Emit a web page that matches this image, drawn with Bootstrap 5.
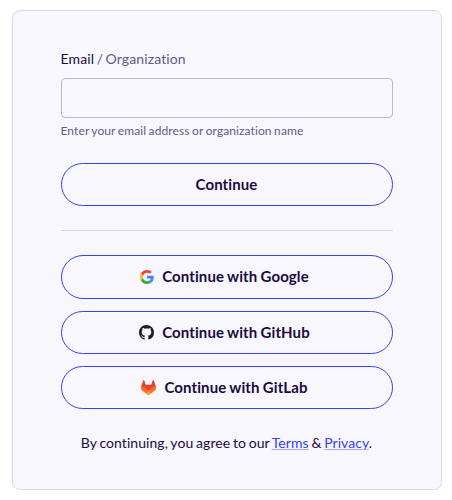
<!DOCTYPE html>
<html lang="en">
<head>
<meta charset="utf-8">
<meta name="viewport" content="width=device-width, initial-scale=1">
<title>Sign in</title>
<link href="https://cdn.jsdelivr.net/npm/bootstrap@5.3.0/dist/css/bootstrap.min.css" rel="stylesheet">
<style>
body{font-family:Lato,"Liberation Sans",sans-serif;font-variant-ligatures:none;color:#1b0b42;background:#fff;font-size:14px;line-height:20px}
.auth-card{width:430px;height:480px;margin:10px 0 0 12px;padding:38px 48px 0;background:#f8f7fd;border:1px solid #d9d7e3;border-radius:8px}
.auth-label{color:#655a87;line-height:20px;margin:0 0 9px -.5px;letter-spacing:.12px;word-spacing:-1.2px}
.auth-label span{color:#1b0b42}
.auth-input{height:40px;background:transparent;border:1px solid #bcb8d0;border-radius:4px}
.auth-help{font-size:12px;line-height:16px;margin:5px 0 0 -.5px;color:#655a87;letter-spacing:.1px;word-spacing:-.7px}
.btn-auth{height:43.2px;border:1px solid #3443f4;color:#1b0b42;font-size:15px;font-weight:700;line-height:20px;padding:0;font-variant-ligatures:none;letter-spacing:.1px;word-spacing:-.5px}
.btn-auth:hover{border-color:#3443f4;background:#eeedfc;color:#1b0b42}
.auth-submit{margin-top:23.6px;padding-right:1px}
.auth-rule{margin:24.2px 0 24.4px;border-top:1px solid #d9d7e3;opacity:1}
.auth-list{gap:12px}
.auth-list .btn-auth{padding-right:5px;padding-bottom:1px}
.auth-list svg{margin-top:1px}
.auth-legal{margin-top:24px;margin-left:-1px;letter-spacing:.06px;word-spacing:-.9px}
.auth-legal a{color:#3443f4;text-decoration-color:#a3a9fa;text-underline-offset:1px}
</style>
</head>
<body>
<main class="auth-card">
<form>
<label for="login" class="auth-label d-block"><span>Email</span> / Organization</label>
<input id="login" type="text" class="form-control auth-input">
<div class="auth-help">Enter your email address or organization name</div>
<button type="button" class="btn btn-auth auth-submit rounded-pill w-100">Continue</button>
<hr class="auth-rule">
<div class="auth-list d-flex flex-column">
<button type="button" class="btn btn-auth rounded-pill d-flex align-items-center justify-content-center gap-2">
<svg width="14" height="14" viewBox="0 0 48 48" aria-hidden="true"><path fill="#EA4335" d="M24 9.5c3.54 0 6.71 1.22 9.21 3.6l6.85-6.85C35.9 2.38 30.47 0 24 0 14.62 0 6.51 5.38 2.56 13.22l7.98 6.19C12.43 13.72 17.74 9.5 24 9.5z"/><path fill="#4285F4" d="M46.98 24.55c0-1.57-.15-3.09-.38-4.55H24v9.02h12.94c-.58 2.96-2.26 5.48-4.78 7.18l7.73 6c4.51-4.18 7.09-10.36 7.09-17.65z"/><path fill="#FBBC05" d="M10.53 28.59A14.5 14.5 0 0 1 9.77 24c0-1.6.27-3.14.76-4.59l-7.98-6.19A24 24 0 0 0 0 24c0 3.88.92 7.54 2.56 10.78l7.97-6.19z"/><path fill="#34A853" d="M24 48c6.48 0 11.93-2.13 15.89-5.81l-7.73-6c-2.15 1.45-4.92 2.3-8.16 2.3-6.26 0-11.57-4.22-13.47-9.91l-7.98 6.19C6.51 42.62 14.62 48 24 48z"/></svg>
<span>Continue with Google</span></button>
<button type="button" class="btn btn-auth rounded-pill d-flex align-items-center justify-content-center gap-2">
<svg width="15" height="15" viewBox="0 0 16 16" aria-hidden="true"><path fill="#1b1f23" d="M8 0C3.58 0 0 3.58 0 8c0 3.54 2.29 6.53 5.47 7.59.4.07.55-.17.55-.38 0-.19-.01-.82-.01-1.49-2.01.37-2.53-.49-2.69-.94-.09-.23-.48-.94-.82-1.13-.28-.15-.68-.52-.01-.53.63-.01 1.08.58 1.23.82.72 1.21 1.87.87 2.33.66.07-.52.28-.87.51-1.07-1.78-.2-3.64-.89-3.64-3.95 0-.87.31-1.59.82-2.15-.08-.2-.36-1.02.08-2.12 0 0 .67-.21 2.2.82.64-.18 1.32-.27 2-.27s1.36.09 2 .27c1.53-1.04 2.2-.82 2.2-.82.44 1.1.16 1.92.08 2.12.51.56.82 1.27.82 2.15 0 3.07-1.87 3.75-3.65 3.95.29.25.54.73.54 1.48 0 1.07-.01 1.93-.01 2.2 0 .21.15.46.55.38A8.01 8.01 0 0 0 16 8c0-4.42-3.58-8-8-8z"/></svg>
<span>Continue with GitHub</span></button>
<button type="button" class="btn btn-auth rounded-pill d-flex align-items-center justify-content-center gap-2">
<svg width="15" height="15" viewBox="0 0 25 24" preserveAspectRatio="none" aria-hidden="true"><path fill="#E24329" d="m24.507 9.5-.034-.09L21.082.562a.896.896 0 0 0-1.694.091l-2.29 7.01H7.825L5.535.653a.898.898 0 0 0-1.694-.09L.451 9.411.416 9.5a6.297 6.297 0 0 0 2.09 7.278l.012.01.03.022 5.16 3.867 2.56 1.935 1.554 1.176a1.051 1.051 0 0 0 1.268 0l1.555-1.176 2.56-1.935 5.197-3.89.014-.01A6.297 6.297 0 0 0 24.507 9.5Z"/><path fill="#FC6D26" d="m24.507 9.5-.034-.09a11.44 11.44 0 0 0-4.56 2.051l-7.447 5.632 4.742 3.584 5.197-3.89.014-.01A6.297 6.297 0 0 0 24.507 9.5Z"/><path fill="#FCA326" d="m7.707 20.677 2.56 1.935 1.555 1.176a1.051 1.051 0 0 0 1.268 0l1.555-1.176 2.56-1.935-4.743-3.584-4.755 3.584Z"/><path fill="#FC6D26" d="M5.01 11.461a11.43 11.43 0 0 0-4.56-2.05L.416 9.5a6.297 6.297 0 0 0 2.09 7.278l.012.01.03.022 5.16 3.867 4.745-3.584-7.444-5.632Z"/></svg>
<span>Continue with GitLab</span></button>
</div>
<p class="auth-legal text-center mb-0">By continuing, you agree to our <a href="#">Terms</a> &amp; <a href="#">Privacy</a>.</p>
</form>
</main>
<script src="https://cdn.jsdelivr.net/npm/bootstrap@5.3.0/dist/js/bootstrap.bundle.min.js"></script>
</body>
</html>
